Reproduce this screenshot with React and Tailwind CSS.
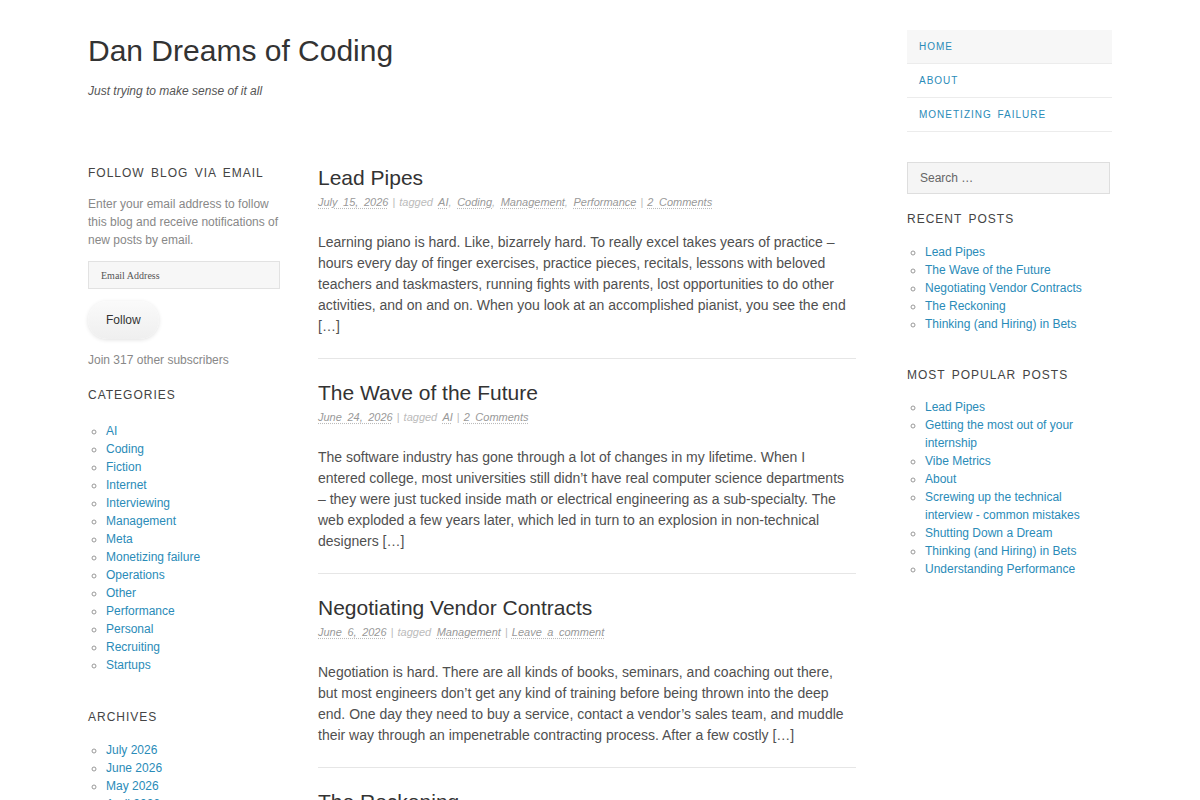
import React from 'react'

const font = "font-['Liberation_Sans',Arial,sans-serif]"
const link = 'text-[#2a8bb8] hover:underline'

const posts = [
  {
    title: 'Lead Pipes',
    date: 'July 15, 2026',
    tags: ['AI', 'Coding', 'Management', 'Performance'],
    comments: '2 Comments',
    excerpt:
      'Learning piano is hard. Like, bizarrely hard. To really excel takes years of practice – hours every day of finger exercises, practice pieces, recitals, lessons with beloved teachers and taskmasters, running fights with parents, lost opportunities to do other activities, and on and on. When you look at an accomplished pianist, you see the end […]',
  },
  {
    title: 'The Wave of the Future',
    date: 'June 24, 2026',
    tags: ['AI'],
    comments: '2 Comments',
    excerpt:
      'The software industry has gone through a lot of changes in my lifetime. When I entered college, most universities still didn’t have real computer science departments – they were just tucked inside math or electrical engineering as a sub-specialty. The web exploded a few years later, which led in turn to an explosion in non-technical designers […]',
  },
  {
    title: 'Negotiating Vendor Contracts',
    date: 'June 6, 2026',
    tags: ['Management'],
    comments: 'Leave a comment',
    excerpt:
      'Negotiation is hard. There are all kinds of books, seminars, and coaching out there, but most engineers don’t get any kind of training before being thrown into the deep end. One day they need to buy a service, contact a vendor’s sales team, and muddle their way through an impenetrable contracting process. After a few costly […]',
  },
  {
    title: 'The Reckoning',
    date: 'May 28, 2026',
    tags: ['Management'],
    comments: 'Leave a comment',
    excerpt: '',
  },
]

const categories = [
  'AI', 'Coding', 'Fiction', 'Internet', 'Interviewing', 'Management', 'Meta',
  'Monetizing failure', 'Operations', 'Other', 'Performance', 'Personal',
  'Recruiting', 'Startups',
]

const archives = ['July 2026', 'June 2026', 'May 2026', 'April 2026', 'March 2026']

const recent = [
  'Lead Pipes',
  'The Wave of the Future',
  'Negotiating Vendor Contracts',
  'The Reckoning',
  'Thinking (and Hiring) in Bets',
]

const popular = [
  'Lead Pipes',
  'Getting the most out of your internship',
  'Vibe Metrics',
  'About',
  'Screwing up the technical interview - common mistakes',
  'Shutting Down a Dream',
  'Thinking (and Hiring) in Bets',
  'Understanding Performance',
]

function WidgetTitle({ children, className = '' }) {
  return (
    <h3 className={`text-[12px] leading-[18px] uppercase tracking-[1px] [word-spacing:2px] text-[#444] ${className}`}>
      {children}
    </h3>
  )
}

function LinkList({ items, className = '' }) {
  return (
    <ul className={`list-[circle] pl-[18px] text-[12px] leading-[18px] marker:text-[#999] ${className}`}>
      {items.map((item) => (
        <li key={item}>
          <a href="#" className={link}>{item}</a>
        </li>
      ))}
    </ul>
  )
}

function Meta({ post }) {
  const metaLink = 'underline decoration-dotted decoration-[#bbb] underline-offset-2 text-[#999]'
  return (
    <div className="text-[11px] leading-[16px] italic text-[#bbb] [word-spacing:2.5px]">
      <a href="#" className={metaLink}>{post.date}</a>
      <span className="mx-[4px] not-italic">|</span>
      tagged{' '}
      {post.tags.map((t, i) => (
        <span key={t}>
          <a href="#" className={metaLink}>{t}</a>
          {i < post.tags.length - 1 && ', '}
        </span>
      ))}
      <span className="mx-[4px] not-italic">|</span>
      <a href="#" className={metaLink}>{post.comments}</a>
    </div>
  )
}

function Post({ post }) {
  return (
    <article className="border-b border-[#e6e6e6] pb-[21px] mb-[20px]">
      <h2 className="text-[21px] leading-[27px] text-[#333] mb-[3px]">
        <a href="#">{post.title}</a>
      </h2>
      <Meta post={post} />
      {post.excerpt && (
        <p className="mt-[22px] pr-[8px] text-[14px] leading-[21px] text-[#505050]">{post.excerpt}</p>
      )}
    </article>
  )
}

export default function App() {
  return (
    <div className={`${font} bg-white min-h-screen`}>
      <div className="max-w-[1024px] mx-auto flex gap-[51px] pt-[30px]">
        {/* Left part: header, email sidebar and posts */}
        <div className="w-[768px] shrink-0">
          <header className="pt-[1px]">
            <h1 className="text-[30px] leading-[40px] text-[#333]">Dan Dreams of Coding</h1>
            <p className="mt-[11px] text-[12px] leading-[18px] italic text-[#555]">Just trying to make sense of it all</p>
          </header>

          <div className="flex gap-[38px] mt-[64px]">
            <aside className="w-[192px] shrink-0">
              <WidgetTitle>Follow Blog via Email</WidgetTitle>
              <p className="mt-[13px] text-[12px] leading-[18px] text-[#888]">
                Enter your email address to follow this blog and receive notifications of new posts by email.
              </p>
              <input
                type="email"
                placeholder="Email Address"
                className="mt-[12px] block w-full h-[28px] px-[12px] bg-[#f7f7f7] border border-[#e2e2e2] text-[10px] font-['Liberation_Serif',serif] placeholder:text-[#555] outline-none"
              />
              <button className="mt-[12px] h-[38px] px-[18px] rounded-full bg-gradient-to-b from-[#fafafa] to-[#efefef] shadow-[0_1px_4px_rgba(0,0,0,0.12)] text-[12px] text-[#333]">
                Follow
              </button>
              <p className="mt-[12px] text-[12px] leading-[18px] text-[#888]">Join 317 other subscribers</p>

              <WidgetTitle className="mt-[17px]">Categories</WidgetTitle>
              <LinkList items={categories} className="mt-[18px]" />

              <WidgetTitle className="mt-[34px]">Archives</WidgetTitle>
              <LinkList items={archives} className="mt-[15px]" />
            </aside>

            <main className="w-[538px] shrink-0">
              {posts.map((p) => (
                <Post key={p.title} post={p} />
              ))}
            </main>
          </div>
        </div>

        {/* Right sidebar */}
        <aside className="w-[205px] shrink-0">
          <nav className="text-[10px] uppercase tracking-[1px] [word-spacing:2px]">
            {['Home', 'About', 'Monetizing failure'].map((item, i) => (
              <a
                key={item}
                href="#"
                className={`block h-[34px] leading-[33px] px-[12px] border-b border-[#ececec] text-[#2a8bb8] ${i === 0 ? 'bg-[#f7f7f7]' : ''}`}
              >
                {item}
              </a>
            ))}
          </nav>

          <input
            type="search"
            placeholder="Search …"
            className="mt-[30px] block w-[203px] h-[32px] px-[12px] bg-[#f5f5f5] border border-[#dedede] text-[12px] placeholder:text-[#666] outline-none"
          />

          <WidgetTitle className="mt-[16px]">Recent Posts</WidgetTitle>
          <LinkList items={recent} className="mt-[15px]" />

          <WidgetTitle className="mt-[33px]">Most Popular Posts</WidgetTitle>
          <LinkList items={popular} className="mt-[14px]" />
        </aside>
      </div>
    </div>
  )
}
